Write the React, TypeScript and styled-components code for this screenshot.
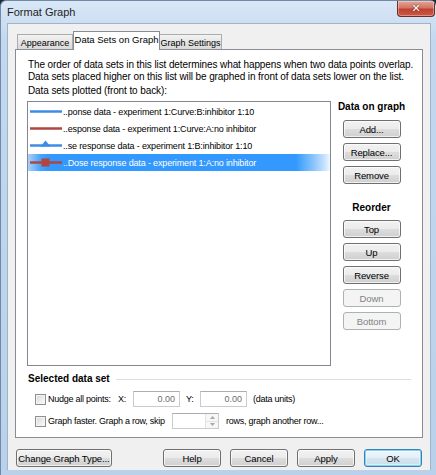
import styled, { createGlobalStyle, css } from 'styled-components'

const Global = createGlobalStyle`
  html, body {
    margin: 0;
    padding: 0;
    background: #1d2a36;
  }
  body {
    font-family: "Liberation Sans", Arial, sans-serif;
    font-size: 9px;
    color: #000;
  }
`

const Window = styled.div`
  width: 436px;
  height: 475px;
  box-sizing: border-box;
  display: flex;
  flex-direction: column;
  background: linear-gradient(#d9e7f6, #c3d8ef 40px, #b9d1ea);
  border: 1px solid #6f8aa6;
  border-right: none;
  border-bottom: none;
  border-radius: 6px 6px 0 0;
  overflow: hidden;
`

const TitleBar = styled.div`
  height: 22px;
  display: flex;
  align-items: flex-start;
  padding-left: 6px;
`

const Title = styled.div`
  font-size: 11px;
  line-height: 23px;
  color: #1e1e1e;
`

const CloseButton = styled.div`
  margin-left: auto;
  margin-right: 1px;
  width: 38px;
  height: 16px;
  box-sizing: border-box;
  border: 1px solid #6e2a24;
  border-top: none;
  border-radius: 0 0 4px 4px;
  background: linear-gradient(#e6a597, #d27565 45%, #c0402f 55%, #c95a45);
  box-shadow: inset 0 0 0 1px rgba(255, 255, 255, 0.35);
  display: flex;
  align-items: center;
  justify-content: center;
  color: #fff;
  font-family: "DejaVu Sans", sans-serif;
  font-weight: bold;
  font-size: 11px;
  text-shadow: 0 0 2px #5a1a10;
`

const Client = styled.div`
  flex: 1;
  margin: 0 5px 5px 6px;
  background: #f0f0f0;
  border: 1px solid #9db4cc;
  border-bottom: none;
  padding: 7px 7px 0 7px;
  display: flex;
  flex-direction: column;
`

const TabStrip = styled.div`
  height: 18px;
  display: flex;
  align-items: flex-end;
  padding-left: 2px;
`

const Tab = styled.div<{ $active?: boolean; $w: number }>`
  width: ${p => p.$w}px;
  box-sizing: border-box;
  border: 1px solid #898c95;
  border-bottom: none;
  text-align: center;
  white-space: nowrap;
  ${p =>
    p.$active
      ? css`
          height: 19px;
          margin-bottom: -1px;
          background: #fff;
          position: relative;
          z-index: 1;
          line-height: 16px;
          font-size: 9.5px;
        `
      : css`
          height: 15px;
          line-height: 16px;
          background: linear-gradient(#f3f3f3, #e5e5e5 50%, #d9d9d9);
          border-color: #acacac;
          margin-left: -1px;
          &:first-child { margin-left: 0; }
        `}
`

const Panel = styled.div`
  height: 389px;
  box-sizing: border-box;
  background: #fff;
  border: 1px solid #898c95;
  padding: 9px 11px 0 11px;
  display: flex;
  flex-direction: column;
`

const Intro = styled.div`
  font-size: 10px;
  letter-spacing: -0.1px;
  line-height: 12px;
  padding-left: 1px;
  white-space: nowrap;
`

const FieldLabel = styled.div`
  margin-top: 2px;
  font-size: 10px;
  line-height: 12px;
  padding-left: 1px;
  letter-spacing: -0.1px;
`

const Main = styled.div`
  margin-top: 4px;
  display: flex;
`

const ListBox = styled.div`
  width: 308px;
  height: 265px;
  box-sizing: border-box;
  border: 1px solid #828790;
  padding: 1px 0 0 0;
`

const Row = styled.div<{ $selected?: boolean }>`
  height: 17px;
  display: flex;
  align-items: center;
  white-space: nowrap;
  overflow: hidden;
  padding-left: 1px;
  font-size: 9px;
  letter-spacing: -0.15px;
  ${p =>
    p.$selected &&
    css`
      color: #fff;
      background: linear-gradient(
        to right,
        #a9d1f7 0px,
        #4ba4fb 12px,
        #3399ff 20px,
        #3399ff 268px,
        #5aaefc 276px,
        #8cc6fd 286px,
        #c3e1fe 296px,
        #ffffff 304px
      );
    `}
`

const Swatch = styled.svg`
  width: 33px;
  height: 17px;
  flex: none;
  margin-right: 1px;
`

const Side = styled.div`
  width: 80px;
  margin-left: 1px;
  display: flex;
  flex-direction: column;
  align-items: center;
`

const SideHeading = styled.div<{ $top: number; $bottom: number }>`
  font-weight: bold;
  font-size: 10px;
  line-height: 12px;
  margin-top: ${p => p.$top}px;
  margin-bottom: ${p => p.$bottom}px;
`

const Button = styled.div<{ $w?: number; $disabled?: boolean; $default?: boolean }>`
  width: ${p => p.$w ?? 58}px;
  height: 18px;
  box-sizing: border-box;
  margin-top: 5px;
  border: 1px solid #707070;
  border-radius: 3px;
  background: linear-gradient(#f2f2f2, #ebebeb 50%, #dddddd 51%, #cfcfcf);
  box-shadow: inset 0 0 0 1px rgba(255, 255, 255, 0.7);
  display: flex;
  align-items: center;
  justify-content: center;
  white-space: nowrap;
  font-size: 9.5px;
  letter-spacing: -0.1px;
  ${p =>
    p.$disabled &&
    css`
      border-color: #adb2b5;
      background: #f4f4f4;
      color: #838383;
      box-shadow: none;
    `}
  ${p =>
    p.$default &&
    css`
      border-color: #3c7fb1;
      box-shadow: inset 0 0 0 1px #7fd4f8, inset 0 0 0 2px rgba(255, 255, 255, 0.4);
      background: linear-gradient(#eef6fb, #e4eff6 50%, #d6e6f0 51%, #cadde9);
    `}
`

const Section = styled.div`
  margin-top: 7px;
  display: flex;
  align-items: center;
  line-height: 12px;
`

const SectionTitle = styled.div`
  font-weight: bold;
  font-size: 10px;
  padding-left: 1px;
`

const Rule = styled.div`
  flex: 1;
  margin-left: 6px;
  border-top: 1px solid #d5dfe5;
`

const OptionRow = styled.div<{ $top: number }>`
  margin-top: ${p => p.$top}px;
  padding-left: 8px;
  display: flex;
  align-items: center;
  height: 16px;
  white-space: nowrap;
  letter-spacing: -0.25px;
`

const Check = styled.div`
  width: 11px;
  height: 11px;
  box-sizing: border-box;
  border: 1px solid #8e8f8f;
  background: linear-gradient(135deg, #d6d6d6, #f2f2f2 70%, #fff);
  box-shadow: inset 0 0 0 1px #f4f4f4;
  margin-right: 2px;
  flex: none;
`

const Text = styled.span<{ $w?: number; $left?: number }>`
  display: inline-block;
  ${p => p.$w !== undefined && `width: ${p.$w}px;`}
  ${p => p.$left !== undefined && `margin-left: ${p.$left}px;`}
`

const NumberBox = styled.div`
  width: 47px;
  height: 16px;
  box-sizing: border-box;
  border: 1px solid #c9cbd0;
  border-top-color: #abadb3;
  background: #fff;
  color: #6d6d6d;
  text-align: right;
  padding-right: 4px;
  line-height: 14px;
  letter-spacing: 0;
`

const SpinBox = styled.div`
  width: 47px;
  height: 16px;
  box-sizing: border-box;
  border: 1px solid #c9cbd0;
  border-top-color: #abadb3;
  background: #fff;
  display: flex;
  justify-content: flex-end;
`

const SpinButtons = styled.div`
  width: 12px;
  display: flex;
  flex-direction: column;
  border-left: 1px solid #e3e3e3;
`

const SpinHalf = styled.div`
  flex: 1;
  display: flex;
  align-items: center;
  justify-content: center;
  background: #f7f7f7;
  & + & {
    border-top: 1px solid #e3e3e3;
  }
`

const Footer = styled.div`
  margin-top: 6px;
  padding: 0 1px;
  display: flex;
  gap: 9px;
  & > :first-child {
    margin-right: auto;
  }
`

type Marker = 'none' | 'triangle' | 'square'

function LineSwatch({ color, marker }: { color: string; marker: Marker }) {
  return (
    <Swatch viewBox="0 0 33 17">
      <line x1="1" y1="8.5" x2="33" y2="8.5" stroke={color} strokeWidth="2.6" />
      {marker === 'triangle' && <polygon points="16.5,3.5 21.5,9.5 11.5,9.5" fill={color} />}
      {marker === 'square' && <rect x="12.5" y="4.5" width="8" height="8" fill={color} />}
    </Swatch>
  )
}

const datasets: { label: string; color: string; marker: Marker; selected?: boolean }[] = [
  { label: '..ponse data - experiment 1:Curve:B:inhibitor 1:10', color: '#3c8de6', marker: 'none' },
  { label: '..esponse data - experiment 1:Curve:A:no inhibitor', color: '#b2453f', marker: 'none' },
  { label: '..se response data - experiment 1:B:inhibitor 1:10', color: '#3c8de6', marker: 'triangle' },
  { label: '..Dose response data - experiment 1:A:no inhibitor', color: '#b2453f', marker: 'square', selected: true },
]

function Arrow({ up }: { up?: boolean }) {
  return (
    <svg width="5" height="3" viewBox="0 0 5 3">
      <polygon points={up ? '2.5,0 5,3 0,3' : '0,0 5,0 2.5,3'} fill="#a8a8a8" />
    </svg>
  )
}

export default function App() {
  return (
    <>
      <Global />
      <Window>
        <TitleBar>
          <Title>Format Graph</Title>
          <CloseButton>✕</CloseButton>
        </TitleBar>
        <Client>
          <TabStrip>
            <Tab $w={56}>Appearance</Tab>
            <Tab $w={87} $active>Data Sets on Graph</Tab>
            <Tab $w={63}>Graph Settings</Tab>
          </TabStrip>
          <Panel>
            <Intro>
              The order of data sets in this list determines what happens when two data points overlap.
              <br />
              Data sets placed higher on this list will be graphed in front of data sets lower on the list.
            </Intro>
            <FieldLabel>Data sets plotted (front to back):</FieldLabel>
            <Main>
              <ListBox>
                {datasets.map(d => (
                  <Row key={d.label} $selected={d.selected}>
                    <LineSwatch color={d.color} marker={d.marker} />
                    {d.label}
                  </Row>
                ))}
              </ListBox>
              <Side>
                <SideHeading $top={0} $bottom={2}>Data on graph</SideHeading>
                <Button>Add...</Button>
                <Button>Replace...</Button>
                <Button>Remove</Button>
                <SideHeading $top={18} $bottom={1}>Reorder</SideHeading>
                <Button>Top</Button>
                <Button>Up</Button>
                <Button>Reverse</Button>
                <Button $disabled>Down</Button>
                <Button $disabled>Bottom</Button>
              </Side>
            </Main>
            <Section>
              <SectionTitle>Selected data set</SectionTitle>
              <Rule />
            </Section>
            <OptionRow $top={6}>
              <Check />
              <Text $w={70}>Nudge all points:</Text>
              <Text $w={15}>X:</Text>
              <NumberBox>0.00</NumberBox>
              <Text $w={14} $left={6}>Y:</Text>
              <NumberBox>0.00</NumberBox>
              <Text $left={6}>(data units)</Text>
            </OptionRow>
            <OptionRow $top={6}>
              <Check />
              <Text $w={124}>Graph faster. Graph a row, skip</Text>
              <SpinBox>
                <SpinButtons>
                  <SpinHalf><Arrow up /></SpinHalf>
                  <SpinHalf><Arrow /></SpinHalf>
                </SpinButtons>
              </SpinBox>
              <Text $left={7}>rows, graph another row...</Text>
            </OptionRow>
          </Panel>
          <Footer>
            <Button $w={96}>Change Graph Type...</Button>
            <Button>Help</Button>
            <Button>Cancel</Button>
            <Button>Apply</Button>
            <Button $default>OK</Button>
          </Footer>
        </Client>
      </Window>
    </>
  )
}
